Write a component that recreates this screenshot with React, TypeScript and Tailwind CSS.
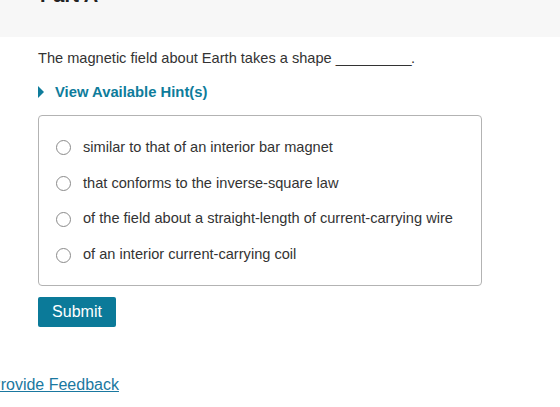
import React from 'react';

const options = [
  'similar to that of an interior bar magnet',
  'that conforms to the inverse-square law',
  'of the field about a straight-length of current-carrying wire',
  'of an interior current-carrying coil',
];

export default function App() {
  return (
    <div className="h-[407px] w-[560px] overflow-hidden bg-white font-['Liberation_Sans',Arial,sans-serif] text-[#333]">
      {/* part header */}
      <div className="flex h-[37px] items-start bg-[#f7f7f7]">
        <div className="-mt-[17px] flex items-center">
          <span className="ml-[10px] h-0 w-0 border-x-[4px] border-t-[5px] border-x-transparent border-t-[#333]" />
          <span className="ml-[22px] text-[20px] leading-[24px] font-bold text-[#222]">Part A</span>
        </div>
      </div>

      <div className="pl-[38px]">
        <p className="mt-[12px] text-[14.6px] leading-[18px]">
          The magnetic field about Earth takes a shape <span className="tracking-[-0.6px]">__________</span>.
        </p>

        <button className="mt-[16px] flex items-center text-[14.8px] leading-[18px] font-bold text-[#0e7c9b]">
          <span className="h-0 w-0 border-y-[6px] border-l-[6px] border-y-transparent border-l-[#0e7c9b]" />
          <span className="ml-[11px]">View Available Hint(s)</span>
        </button>

        <div className="mt-[14px] w-[444px] rounded-[4px] border border-[#b3b3b3] pt-[14px] pb-[12px]">
          {options.map((opt) => (
            <label key={opt} className="flex h-[35.75px] items-center pl-[17px] text-[14.6px]">
              <span className="h-[15px] w-[15px] shrink-0 rounded-full border border-[#8a8a8a] bg-white" />
              <span className="ml-[12px]">{opt}</span>
            </label>
          ))}
        </div>

        <button className="mt-[11px] h-[30px] w-[78px] rounded-[2px] bg-[#0b7a99] text-[16px] text-white">
          Submit
        </button>
      </div>

      <a href="#" className="-ml-[10px] mt-[49px] block w-fit text-[16px] leading-[18px] text-[#1a78a0] underline">
        Provide Feedback
      </a>
    </div>
  );
}
